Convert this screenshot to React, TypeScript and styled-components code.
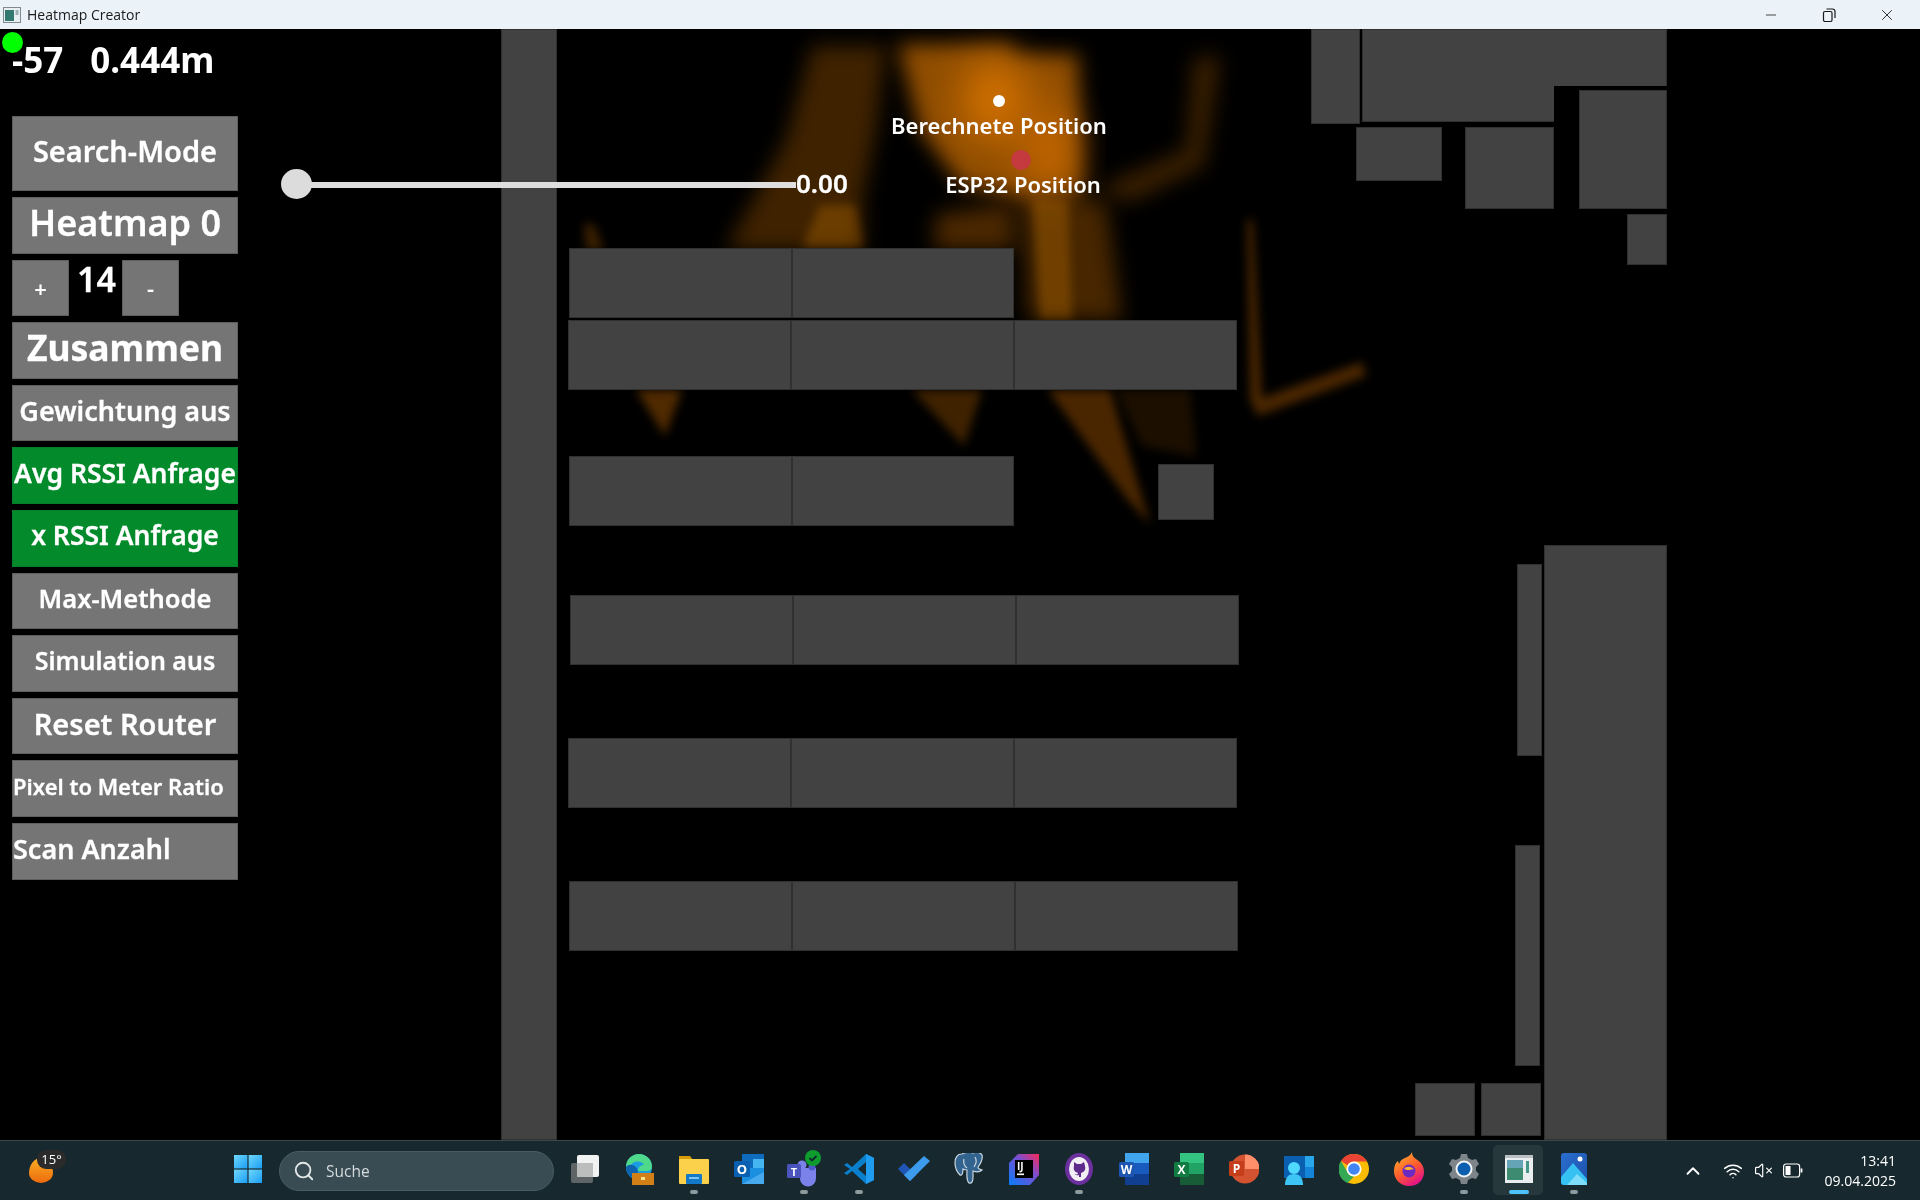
import React from "react";
import styled, { createGlobalStyle } from "styled-components";
import { Search, ChevronUp, Wifi, VolumeX, Minus, X } from "lucide-react";

const GlobalStyle = createGlobalStyle`
  html, body {
    margin: 0;
    padding: 0;
    background: #000;
    font-family: "Noto Sans", "Open Sans", sans-serif;
  }
  * { box-sizing: border-box; }
`;

const Screen = styled.div`
  width: 1920px;
  height: 1200px;
  display: flex;
  flex-direction: column;
  overflow: hidden;
`;

const TitleBar = styled.div`
  height: 29px;
  flex: none;
  display: flex;
  align-items: center;
  padding: 0 4px 0 3px;
  background: #ebf3f9;
  color: #1b1b1b;
  font-family: "Open Sans", sans-serif;
  font-size: 14px;
`;

const TitleText = styled.span`
  margin-left: 6px;
  flex: 1;
`;

const WinButton = styled.div`
  width: 58px;
  height: 29px;
  display: flex;
  align-items: center;
  justify-content: center;
  color: #1b1b1b;
`;

const Stage = styled.div`
  position: relative;
  flex: 1;
  background: #000;
  overflow: hidden;
`;

const FloorPlan = styled.div`
  position: absolute;
  inset: 0;
`;

const HeatLayer = styled.svg`
  position: absolute;
  left: 0;
  top: 0;
`;

const Room = styled.div<{ $x: number; $y: number; $w: number; $h: number }>`
  position: absolute;
  left: ${(p) => p.$x}px;
  top: ${(p) => p.$y - 29}px;
  width: ${(p) => p.$w}px;
  height: ${(p) => p.$h}px;
  background: #424242;
  border: 1px solid #303030;
`;

const CornerRoom = styled(Room)`
  clip-path: polygon(0 0, 100% 0, 100% 57px, 192px 57px, 192px 100%, 0 100%);
`;

const SliderTrack = styled.div`
  position: absolute;
  left: 296px;
  top: 153px;
  width: 500px;
  height: 6px;
  background: #dedede;
`;

const SliderKnob = styled.div`
  position: absolute;
  left: 281px;
  top: 140px;
  width: 31px;
  height: 30px;
  border-radius: 50%;
  background: #dcdcdc;
`;

const SliderValue = styled.div`
  position: absolute;
  left: 796px;
  top: 139px;
  color: #fff;
  font-size: 26px;
  font-weight: 600;
  line-height: 30px;
  -webkit-text-stroke: 0.3px #fff;
`;

const Marker = styled.div<{ $x: number; $y: number; $r: number; $color: string }>`
  position: absolute;
  left: ${(p) => p.$x - p.$r}px;
  top: ${(p) => p.$y - 29 - p.$r}px;
  width: ${(p) => p.$r * 2}px;
  height: ${(p) => p.$r * 2}px;
  border-radius: 50%;
  background: ${(p) => p.$color};
`;

const MapLabel = styled.div<{ $x: number; $y: number }>`
  position: absolute;
  left: ${(p) => p.$x}px;
  top: ${(p) => p.$y - 29}px;
  transform: translate(-50%, -50%);
  color: #fff;
  font-size: 22px;
  font-weight: 600;
  white-space: nowrap;
`;

const Sidebar = styled.div`
  position: relative;
  width: 226px;
  margin-left: 12px;
  display: flex;
  flex-direction: column;
  gap: 6px;
`;

const StatusLine = styled.div`
  height: 81px;
  display: flex;
  gap: 27px;
  padding-top: 7px;
  color: #fff;
  font-size: 35px;
  font-weight: 700;
  line-height: 48px;
`;

const StatusDot = styled.div`
  position: absolute;
  left: -10px;
  top: 3px;
  width: 21px;
  height: 21px;
  border-radius: 50%;
  background: #00ff00;
`;

const PanelButton = styled.div<{
  $size: number;
  $h?: number;
  $green?: boolean;
  $left?: boolean;
  $weight?: number;
}>`
  height: ${(p) => p.$h ?? 56.6}px;
  flex: none;
  display: flex;
  align-items: center;
  justify-content: ${(p) => (p.$left ? "flex-start" : "center")};
  padding-bottom: 6px;
  background: ${(p) => (p.$green ? "#038b2b" : "#757575")};
  border: 1px solid ${(p) => (p.$green ? "#05802a" : "#5e5e5e")};
  color: #fff;
  font-size: ${(p) => p.$size}px;
  font-weight: ${(p) => p.$weight ?? 600};
  -webkit-text-stroke: 0.3px #fff;
  white-space: nowrap;
`;

const CounterRow = styled.div`
  display: flex;
  align-items: flex-start;
  gap: 8px;
`;

const CounterButton = styled.div`
  width: 57px;
  height: 56.6px;
  display: flex;
  align-items: center;
  justify-content: center;
  background: #757575;
  border: 1px solid #5e5e5e;
  color: #fff;
  font-size: 22px;
  font-weight: 600;
`;

const CounterValue = styled.div`
  color: #fff;
  font-size: 34px;
  font-weight: 600;
  -webkit-text-stroke: 0.3px #fff;
  line-height: 38px;
  width: 37px;
  text-align: center;
`;

const Taskbar = styled.div`
  height: 60px;
  flex: none;
  display: flex;
  align-items: center;
  position: relative;
  background: #17292f;
  border-top: 1px solid #3a474c;
  font-family: "Open Sans", sans-serif;
`;

const Weather = styled.div`
  width: 220px;
  height: 100%;
  position: relative;
  flex: none;
`;

const WeatherSun = styled.div`
  position: absolute;
  left: 29px;
  top: 17px;
  width: 24px;
  height: 25px;
  border-radius: 50% 50% 50% 50% / 60% 60% 40% 40%;
  background: linear-gradient(180deg, #f8ae24, #ee6a0c);
`;

const WeatherBadge = styled.div`
  position: absolute;
  left: 37px;
  top: 9px;
  width: 29px;
  height: 19px;
  border-radius: 9px;
  background: #2b2b2b;
  color: #fff;
  font-size: 13px;
  line-height: 19px;
  text-align: center;
`;

const Slot = styled.div<{ $w?: number }>`
  width: ${(p) => p.$w ?? 55}px;
  height: 100%;
  flex: none;
  position: relative;
  display: flex;
  align-items: center;
  justify-content: center;
  padding-bottom: 3px;
`;

const ActiveBox = styled.div`
  position: absolute;
  left: 2px;
  top: 4px;
  width: 50px;
  height: 50px;
  border-radius: 5px;
  background: rgba(255, 255, 255, 0.07);
`;

const PinDot = styled.div<{ $active?: boolean }>`
  position: absolute;
  left: 50%;
  bottom: 6px;
  transform: translateX(-50%);
  width: ${(p) => (p.$active ? 20 : 8)}px;
  height: 4px;
  border-radius: 2px;
  background: ${(p) => (p.$active ? "#4cc2ff" : "#8d9a9e")};
`;

const SearchBox = styled.div`
  width: 275px;
  height: 40px;
  flex: none;
  margin: 0 2px 0 4px;
  display: flex;
  align-items: center;
  gap: 11px;
  padding-left: 13px;
  border-radius: 20px;
  background: #394c53;
  border: 1px solid #4a5c63;
  color: #d4dadc;
  font-size: 15.5px;
`;

const Tray = styled.div`
  position: absolute;
  right: 0;
  top: 0;
  height: 100%;
  display: flex;
  align-items: center;
  color: #fff;
`;

const TrayIcon = styled.div<{ $w: number }>`
  width: ${(p) => p.$w}px;
  display: flex;
  justify-content: center;
`;

const Clock = styled.div`
  margin-left: 14px;
  padding-right: 24px;
  text-align: right;
  color: #fff;
  font-size: 14px;
  line-height: 20px;
`;

const rooms = [
  [501, 29, 56, 1111],
  [569, 248, 223, 70],
  [792, 248, 222, 70],
  [568, 320, 223, 70],
  [791, 320, 223, 70],
  [1014, 320, 223, 70],
  [569, 456, 223, 70],
  [792, 456, 222, 70],
  [1158, 464, 56, 56],
  [570, 595, 223, 70],
  [793, 595, 223, 70],
  [1016, 595, 223, 70],
  [568, 738, 223, 70],
  [791, 738, 223, 70],
  [1014, 738, 223, 70],
  [569, 881, 223, 70],
  [792, 881, 223, 70],
  [1015, 881, 223, 70],
  [1311, 29, 49, 95],
  [1356, 127, 86, 54],
  [1465, 127, 89, 82],
  [1579, 90, 88, 119],
  [1627, 214, 40, 51],
  [1544, 545, 123, 595],
  [1517, 564, 25, 192],
  [1515, 845, 25, 221],
  [1415, 1083, 60, 53],
  [1481, 1083, 60, 53],
];

// heat blobs above the rooms, soft edges: [points, colour]
const softBlobs: [string, string][] = [
  ["812,46 886,46 876,130 862,200 862,250 726,250 786,140", "#3f2200"],
  ["898,44 1012,44 1014,54 1078,54 1082,192 1020,196 962,186 920,130", "#8f4d00"],
  ["936,214 1012,204 1014,250 934,250", "#4a2700"],
  ["1022,198 1106,202 1122,320 1028,320", "#472600"],
  ["1194,58 1220,56 1204,166 1130,202 1096,188 1186,150", "#3a1f00"],
];

// thin or brighter streaks, tighter blur
const tightBlobs: [string, string][] = [
  ["820,205 856,205 864,248 802,248", "#3a1f00"],
  ["1032,200 1068,200 1072,320 1040,320", "#3a1f00"],
  ["584,224 594,224 604,250 586,250", "#3a1f00"],
  ["636,390 682,390 665,436", "#502a00"],
  ["912,390 982,390 964,446", "#3f2200"],
  ["1048,390 1110,390 1150,524 1128,500", "#4a2600"],
  ["1116,390 1190,390 1196,456 1142,446", "#1c0f00"],
  ["1247,220 1253,220 1262,398 1362,362 1366,376 1258,416 1250,400", "#4a2600"],
];

function Heatmap() {
  return (
    <HeatLayer width="1920" height="1111" viewBox="0 29 1920 1111">
      <defs>
        <filter id="blur10" x="-30%" y="-30%" width="160%" height="160%" colorInterpolationFilters="sRGB">
          <feGaussianBlur stdDeviation="10" />
        </filter>
        <filter id="blur5" x="-30%" y="-30%" width="160%" height="160%" colorInterpolationFilters="sRGB">
          <feGaussianBlur stdDeviation="5" />
        </filter>
        <filter id="blur20" x="-60%" y="-60%" width="220%" height="220%" colorInterpolationFilters="sRGB">
          <feGaussianBlur stdDeviation="20" />
        </filter>
      </defs>
      <g filter="url(#blur10)" style={{ mixBlendMode: "screen" }}>
        {softBlobs.map(([points, fill]) => (
          <polygon key={points} points={points} fill={fill} />
        ))}
      </g>
      <g filter="url(#blur5)" style={{ mixBlendMode: "screen" }}>
        {tightBlobs.map(([points, fill]) => (
          <polygon key={points} points={points} fill={fill} />
        ))}
      </g>
      <ellipse cx="995" cy="100" rx="34" ry="42" fill="#e27a00" opacity="0.8" filter="url(#blur20)" />
      <ellipse cx="1048" cy="150" rx="26" ry="44" fill="#cf6c00" opacity="0.85" filter="url(#blur20)" />
    </HeatLayer>
  );
}

const AppWindowIcon = () => (
  <svg width="18" height="16" viewBox="0 0 18 16">
    <rect x="0.5" y="0.5" width="17" height="15" fill="#e9eef0" stroke="#7e8a90" />
    <rect x="2" y="3" width="9" height="11" fill="#33796f" />
    <rect x="12.5" y="3" width="3" height="5" fill="#9fb0b6" />
  </svg>
);

const RestoreIcon = () => (
  <svg width="14" height="14" viewBox="0 0 14 14" fill="none" stroke="#1b1b1b" strokeWidth="1.2">
    <rect x="1.5" y="3.5" width="8.5" height="10" rx="1.5" />
    <path d="M4.5 1h6a2.5 2.5 0 0 1 2.5 2.5V10" />
  </svg>
);

const StartIcon = () => (
  <svg width="30" height="30" viewBox="0 0 30 30">
    <defs>
      <linearGradient id="winA" x1="0" y1="0" x2="1" y2="1">
        <stop offset="0" stopColor="#6fd7fb" />
        <stop offset="1" stopColor="#1b9ef5" />
      </linearGradient>
    </defs>
    <rect x="1" y="1" width="13.4" height="13.4" fill="url(#winA)" />
    <rect x="15.6" y="1" width="13.4" height="13.4" fill="url(#winA)" />
    <rect x="1" y="15.6" width="13.4" height="13.4" fill="url(#winA)" />
    <rect x="15.6" y="15.6" width="13.4" height="13.4" fill="url(#winA)" />
  </svg>
);

const TaskViewIcon = () => (
  <svg width="30" height="30" viewBox="0 0 30 30">
    <rect x="2" y="9" width="22" height="20" rx="2" fill="#5f6466" />
    <rect x="8" y="1" width="22" height="22" rx="2" fill="#f1f2f2" />
    <rect x="8" y="9" width="16" height="14" fill="#bcbdbd" />
  </svg>
);

const EdgeIcon = () => (
  <svg width="30" height="32" viewBox="0 0 30 32">
    <circle cx="15" cy="14" r="13" fill="#1b9de2" />
    <path d="M2 14a13 13 0 0 1 26 0c0 3-3 4-6 4h-8c0-4 3-6 6-6-2-5-12-5-14 2z" fill="#4fd98b" />
    <path d="M14 18c-1 5 3 8 7 8-6 3-18 0-19-12 3-4 10-3 12 4z" fill="#0f64b0" />
    <rect x="8" y="20" width="22" height="12" fill="#d27f17" />
    <rect x="17" y="24" width="4" height="3" fill="#ffe08a" />
  </svg>
);

const ExplorerIcon = () => (
  <svg width="30" height="30" viewBox="0 0 30 30">
    <path d="M0 2h11l3 4H0z" fill="#d69b07" />
    <rect y="5" width="30" height="25" rx="1" fill="#fbd14b" />
    <rect x="7" y="20" width="16" height="10" rx="1" fill="#1478c8" />
    <rect x="10" y="23" width="10" height="2" fill="#7cc4f3" />
  </svg>
);

const OutlookIcon = () => (
  <svg width="30" height="30" viewBox="0 0 30 30">
    <rect x="8" y="0" width="22" height="16" fill="#0f6cbd" />
    <rect x="19" y="5" width="11" height="10" fill="#46b6f3" />
    <path d="M8 14h22v16H8z" fill="#1b8fe0" />
    <path d="M8 30l22-12v12z" fill="#47a9ee" />
    <rect x="0" y="7" width="16" height="16" rx="1.5" fill="#0a5fb0" />
    <text x="8" y="20" textAnchor="middle" fontSize="13" fontWeight="700" fill="#fff" fontFamily="Open Sans">O</text>
  </svg>
);

const TeamsIcon = () => (
  <svg width="36" height="38" viewBox="0 0 36 38">
    <circle cx="16" cy="15" r="4.5" fill="#7b83eb" />
    <path d="M12 18h18v10a8 8 0 0 1-16 1z" fill="#7b83eb" />
    <circle cx="26" cy="17" r="3.5" fill="#5059c9" />
    <rect x="1" y="14" width="14" height="14" rx="1.5" fill="#4b53bc" />
    <text x="8" y="25.5" textAnchor="middle" fontSize="11" fontWeight="700" fill="#fff" fontFamily="Open Sans">T</text>
    <circle cx="27" cy="8" r="8" fill="#0d9c2d" />
    <path d="M23.5 8l2.5 2.5 4.5-4.5" fill="none" stroke="#10282c" strokeWidth="1.8" />
  </svg>
);

const VsCodeIcon = () => (
  <svg width="30" height="32" viewBox="0 0 30 32">
    <path d="M22 1l8 4v22l-8 4L8 18l-5 4-3-2 6-4-6-4 3-2 5 4z" fill="#0a7fcb" />
    <path d="M22 1l8 4v22l-8 4z" fill="#1f9cf0" />
    <path d="M22 9l-8 7 8 7z" fill="#17292f" />
  </svg>
);

const TodoIcon = () => (
  <svg width="32" height="28" viewBox="0 0 32 28">
    <path d="M0 14l6-6 6 6-6 6z" fill="#1f56b5" />
    <path d="M6 20l6-6 6 6-6 6 0 0z" fill="#2f7de0" />
    <path d="M12 26L6 20 26 1l6 5z" fill="#3c9bec" />
  </svg>
);

const PostgresIcon = () => (
  <svg width="30" height="32" viewBox="0 0 30 32" fill="#33638f" stroke="#c9d6dd" strokeWidth="1.2">
    <path d="M8 1C3 1 1 5 1 10c0 4 2 9 5 12 2 1 3-2 3-6 2 1 3 1 4 1 0 5-1 10 2 13 3 1 4-2 4-6v-6c3 1 7 1 9-1-3-1-4-1-4-3 3-4 5-8 4-12-2-3-6-3-9-2-3-1-7-1-11 1z" />
    <path d="M10 6c-1 3 0 7 3 9M21 4c2 3 1 7-1 10" fill="none" />
  </svg>
);

const IntellijIcon = () => (
  <svg width="30" height="32" viewBox="0 0 30 32">
    <defs>
      <linearGradient id="ijA" x1="0" y1="1" x2="1" y2="0">
        <stop offset="0" stopColor="#087cfa" />
        <stop offset="0.6" stopColor="#7a4ed0" />
        <stop offset="1" stopColor="#fe2857" />
      </linearGradient>
    </defs>
    <path d="M9 1h21v21l-9 10H0V10z" fill="url(#ijA)" />
    <rect x="6" y="7" width="18" height="18" fill="#000" />
    <text x="8" y="17" fontSize="10" fontWeight="700" fill="#fff" fontFamily="Open Sans">IJ</text>
    <rect x="8" y="20.5" width="7" height="1.6" fill="#fff" />
  </svg>
);

const GithubIcon = () => (
  <svg width="28" height="32" viewBox="0 0 28 32">
    <ellipse cx="14" cy="16" rx="14" ry="16" fill="#6c2f9e" />
    <ellipse cx="14" cy="16" rx="10" ry="12" fill="#f1eef4" />
    <path d="M9 9l3 2h4l3-2 1 4c1 4-1 6-4 7v4h-1l-1 0v-2c-3 1-4-1-4-1 2 1 3 0 3-1-3-1-5-3-4-7z" fill="#5e2a8c" />
  </svg>
);

const OfficeIcon = (props: { letter: string; back: string; mid: string; front: string; light: string }) => (
  <svg width="30" height="32" viewBox="0 0 30 32">
    <rect x="6" y="0" width="24" height="32" rx="1.5" fill={props.back} />
    <rect x="6" y="0" width="24" height="10" fill={props.light} />
    <rect x="6" y="21" width="24" height="11" fill={props.mid} />
    <rect x="0" y="9" width="15" height="15" rx="1.5" fill={props.front} />
    <text x="7.5" y="21" textAnchor="middle" fontSize="12" fontWeight="700" fill="#fff" fontFamily="Open Sans">{props.letter}</text>
  </svg>
);

const PowerPointIcon = () => (
  <svg width="30" height="30" viewBox="0 0 30 30">
    <circle cx="16" cy="15" r="14.5" fill="#d35230" />
    <path d="M16 .5A14.5 14.5 0 0 1 30.5 15H16z" fill="#ff8f6b" />
    <rect x="0" y="7" width="15" height="15" rx="1.5" fill="#c43e1c" />
    <text x="7.5" y="19" textAnchor="middle" fontSize="12" fontWeight="700" fill="#fff" fontFamily="Open Sans">P</text>
  </svg>
);

const PeopleIcon = () => (
  <svg width="30" height="32" viewBox="0 0 30 32">
    <rect x="0" y="3" width="30" height="22" fill="#0a5fb0" />
    <rect x="21" y="3" width="9" height="11" fill="#28a8ea" />
    <rect x="21" y="14" width="9" height="11" fill="#1384d8" />
    <circle cx="10" cy="15" r="6" fill="#50d9ff" />
    <path d="M1 32c0-8 4-11 9-11s9 3 9 11z" fill="#3dc5f5" />
  </svg>
);

const ChromeIcon = () => (
  <svg width="30" height="30" viewBox="0 0 30 30">
    <circle cx="15" cy="15" r="15" fill="#fbbc04" />
    <path d="M15 0a15 15 0 0 1 13 7.500H15a7.500 7.500 0 0 0-6.500 3.750L2 7A15 15 0 0 1 15 0z" fill="#ea4335" />
    <path d="M2 7l6.500 11.250A7.500 7.500 0 0 0 15 22.500L8.500 29A15 15 0 0 1 2 7z" fill="#34a853" />
    <circle cx="15" cy="15" r="7.500" fill="#fff" />
    <circle cx="15" cy="15" r="5.800" fill="#4285f4" />
  </svg>
);

const FirefoxIcon = () => (
  <svg width="30" height="34" viewBox="0 0 30 34">
    <defs>
      <linearGradient id="ffA" x1="0" y1="0" x2="0.6" y2="1">
        <stop offset="0" stopColor="#ffbd2e" />
        <stop offset="0.6" stopColor="#ff5a2c" />
        <stop offset="1" stopColor="#e31587" />
      </linearGradient>
    </defs>
    <path d="M15 34C6 34 0 27 0 19c0-4 1-8 4-10l1 3c1-3 3-5 6-6 5-2 6-4 7-6 0 3 1 5 4 7 5 3 8 7 8 13 0 8-6 14-15 14z" fill="url(#ffA)" />
    <circle cx="15" cy="19" r="6.500" fill="#6b2bc2" />
    <path d="M10 17c2-3 8-3 10 1-1-1-3-1-4 0-2 0-4 0-6-1z" fill="#ffb32e" />
  </svg>
);

const SettingsIcon = () => (
  <svg width="30" height="30" viewBox="0 0 30 30">
    <path
      d="M12 0h6l1 4 4 2 4-1 3 5-3 3v4l3 3-3 5-4-1-4 2-1 4h-6l-1-4-4-2-4 1-3-5 3-3v-4L0 10l3-5 4 1 4-2z"
      fill="#7d858a"
    />
    <circle cx="15" cy="15" r="8.500" fill="#f1f3f4" />
    <circle cx="15" cy="15" r="6.500" fill="#0d5fb0" />
  </svg>
);

const ActiveAppIcon = () => (
  <svg width="28" height="28" viewBox="0 0 28 28">
    <rect width="28" height="28" fill="#e9edee" />
    <rect y="0" width="28" height="3" fill="#b5bcc0" />
    <rect x="2" y="5" width="16" height="20" fill="#2f8468" />
    <rect x="2" y="5" width="16" height="8" fill="#5a9eb2" />
    <rect x="21" y="6" width="3" height="12" fill="#379180" />
  </svg>
);

const PhotosIcon = () => (
  <svg width="26" height="32" viewBox="0 0 26 32">
    <defs>
      <linearGradient id="phA" x1="0" y1="0" x2="1" y2="1">
        <stop offset="0" stopColor="#2a6fd0" />
        <stop offset="1" stopColor="#1e4fa8" />
      </linearGradient>
    </defs>
    <rect width="26" height="32" rx="3" fill="url(#phA)" />
    <circle cx="19" cy="6" r="2.500" fill="#fff" />
    <path d="M0 24L12 10l14 16v3a3 3 0 0 1-3 3H3a3 3 0 0 1-3-3z" fill="#35c1f1" />
    <path d="M6 32l10-11 10 9v2z" fill="#7fdcf8" />
  </svg>
);

const BatteryIcon = () => (
  <svg width="20" height="16" viewBox="0 0 20 16" fill="none" stroke="#fff" strokeWidth="1.2">
    <rect x="0.600" y="1" width="16" height="13" rx="2.500" />
    <rect x="2.500" y="3" width="5" height="9" fill="#fff" stroke="none" />
    <path d="M18.500 5.500v4" strokeWidth="1.800" />
  </svg>
);

export default function App() {
  return (
    <Screen>
      <GlobalStyle />
      <TitleBar>
        <AppWindowIcon />
        <TitleText>Heatmap Creator</TitleText>
        <WinButton>
          <Minus size={16} strokeWidth={1.2} />
        </WinButton>
        <WinButton>
          <RestoreIcon />
        </WinButton>
        <WinButton>
          <X size={18} strokeWidth={1.2} />
        </WinButton>
      </TitleBar>

      <Stage>
        <FloorPlan>
          <Heatmap />
          {rooms.map(([x, y, w, h]) => (
            <Room key={`${x}-${y}`} $x={x} $y={y} $w={w} $h={h} />
          ))}
          <CornerRoom $x={1362} $y={29} $w={305} $h={93} />
          <SliderTrack />
          <SliderKnob />
          <SliderValue>0.00</SliderValue>
          <Marker $x={999} $y={101} $r={6} $color="#fff" />
          <MapLabel $x={999} $y={125}>Berechnete Position</MapLabel>
          <Marker $x={1021} $y={160} $r={10} $color="#c43a3e" />
          <MapLabel $x={1023} $y={184}>ESP32 Position</MapLabel>
        </FloorPlan>

        <Sidebar>
          <StatusDot />
          <StatusLine>
            <span>-57</span>
            <span>0.444m</span>
          </StatusLine>
          <PanelButton $size={29} $h={75}>Search-Mode</PanelButton>
          <PanelButton $size={36}>Heatmap 0</PanelButton>
          <CounterRow>
            <CounterButton>+</CounterButton>
            <CounterValue>14</CounterValue>
            <CounterButton>-</CounterButton>
          </CounterRow>
          <PanelButton $size={35.5} $weight={700}>Zusammen</PanelButton>
          <PanelButton $size={27}>Gewichtung aus</PanelButton>
          <PanelButton $size={26.5} $green>Avg RSSI Anfrage</PanelButton>
          <PanelButton $size={26.5} $green>x RSSI Anfrage</PanelButton>
          <PanelButton $size={25.5}>Max-Methode</PanelButton>
          <PanelButton $size={25}>Simulation aus</PanelButton>
          <PanelButton $size={29}>Reset Router</PanelButton>
          <PanelButton $size={22} $left>Pixel to Meter Ratio</PanelButton>
          <PanelButton $size={27} $left>Scan Anzahl</PanelButton>
        </Sidebar>
      </Stage>

      <Taskbar>
        <Weather>
          <WeatherSun />
          <WeatherBadge>15°</WeatherBadge>
        </Weather>
        <Slot><StartIcon /></Slot>
        <SearchBox>
          <Search size={22} color="#e4e8e9" strokeWidth={2} />
          <span>Suche</span>
        </SearchBox>
        <Slot $w={55}><TaskViewIcon /></Slot>
        <Slot><EdgeIcon /></Slot>
        <Slot><ExplorerIcon /><PinDot /></Slot>
        <Slot><OutlookIcon /></Slot>
        <Slot><TeamsIcon /><PinDot /></Slot>
        <Slot><VsCodeIcon /><PinDot /></Slot>
        <Slot><TodoIcon /></Slot>
        <Slot><PostgresIcon /></Slot>
        <Slot><IntellijIcon /></Slot>
        <Slot><GithubIcon /><PinDot /></Slot>
        <Slot><OfficeIcon letter="W" back="#185abd" mid="#103f91" front="#1c56b0" light="#41a5ee" /></Slot>
        <Slot><OfficeIcon letter="X" back="#21a366" mid="#185c37" front="#107c41" light="#33c481" /></Slot>
        <Slot><PowerPointIcon /></Slot>
        <Slot><PeopleIcon /></Slot>
        <Slot><ChromeIcon /></Slot>
        <Slot><FirefoxIcon /></Slot>
        <Slot><SettingsIcon /><PinDot /></Slot>
        <Slot><ActiveBox /><ActiveAppIcon /><PinDot $active /></Slot>
        <Slot><PhotosIcon /><PinDot /></Slot>
        <Tray>
          <TrayIcon $w={40}><ChevronUp size={22} strokeWidth={2} /></TrayIcon>
          <TrayIcon $w={40}><Wifi size={20} strokeWidth={1.8} /></TrayIcon>
          <TrayIcon $w={22}><VolumeX size={19} strokeWidth={1.5} /></TrayIcon>
          <TrayIcon $w={36}><BatteryIcon /></TrayIcon>
          <Clock>
            <div>13:41</div>
            <div>09.04.2025</div>
          </Clock>
        </Tray>
      </Taskbar>
    </Screen>
  );
}
